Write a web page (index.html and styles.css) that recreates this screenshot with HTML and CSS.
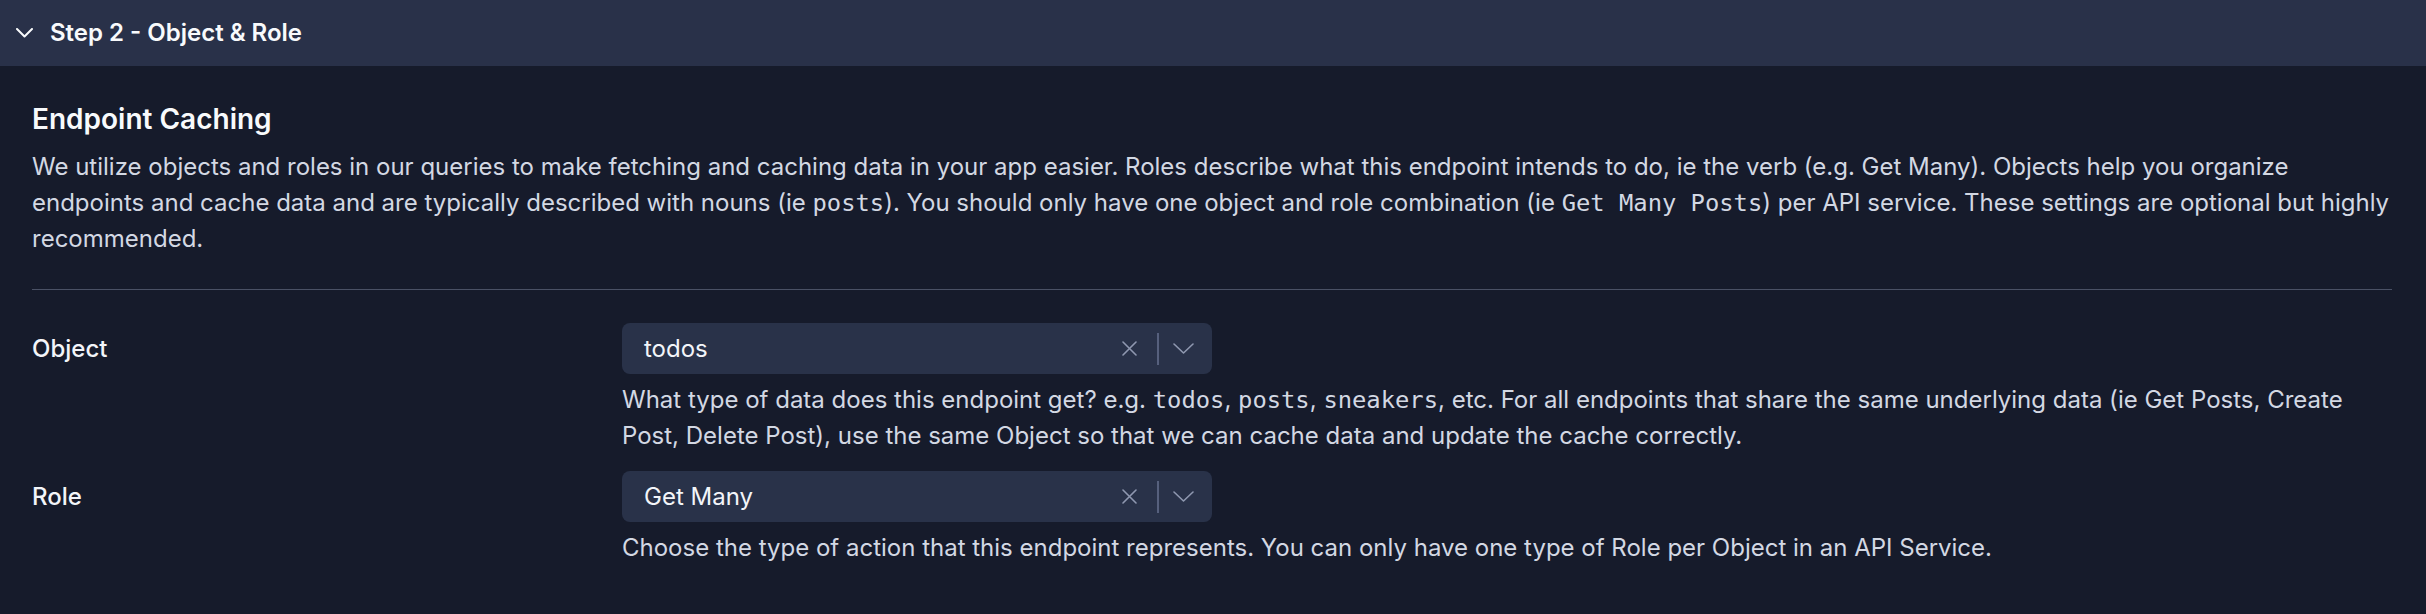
FILE: index.html
```html
<!DOCTYPE html>
<html lang="en">
<head>
<meta charset="utf-8">
<title>Step 2 - Object &amp; Role</title>
<link rel="stylesheet" href="styles.css">
</head>
<body>
<section class="panel">
  <div class="panel-header">
    <svg class="chev" width="17" height="10" viewBox="0 0 17 10" aria-hidden="true"><path d="M1 1 L8.5 8.5 L16 1" fill="none" stroke="currentColor" stroke-width="2" stroke-linecap="round" stroke-linejoin="round"/></svg>
    <span class="panel-title">Step 2 - Object &amp; Role</span>
  </div>
  <div class="panel-body">
    <h2 class="section-title">Endpoint Caching</h2>
    <p class="intro">We utilize objects and roles in our queries to make fetching and caching data in your app easier. Roles describe what this endpoint intends to do, ie the verb (e.g. Get Many). Objects help you organize endpoints and cache data and are typically described with nouns (ie <code>posts</code>). You should only have one object and role combination (ie <code>Get Many Posts</code>) per API service. These settings are optional but highly recommended.</p>
    <hr class="divider">
    <div class="field">
      <label class="field-label">Object</label>
      <div class="select">
        <span class="select-value">todos</span>
        <svg class="clear" width="15" height="15" viewBox="0 0 15 15" aria-hidden="true"><path d="M1 1 L14 14 M14 1 L1 14" stroke="currentColor" stroke-width="1.6" stroke-linecap="round"/></svg>
        <span class="sep"></span>
        <svg class="caret" width="21" height="11" viewBox="0 0 21 11" aria-hidden="true"><path d="M1 1 L10.5 10 L20 1" fill="none" stroke="currentColor" stroke-width="1.6" stroke-linecap="round" stroke-linejoin="round"/></svg>
      </div>
      <p class="help">What type of data does this endpoint get? e.g. <code>todos</code>, <code>posts</code>, <code>sneakers</code>, etc. For all endpoints that share the same underlying data (ie Get Posts, Create Post, Delete Post), use the same Object so that we can cache data and update the cache correctly.</p>
    </div>
    <div class="field">
      <label class="field-label">Role</label>
      <div class="select">
        <span class="select-value">Get Many</span>
        <svg class="clear" width="15" height="15" viewBox="0 0 15 15" aria-hidden="true"><path d="M1 1 L14 14 M14 1 L1 14" stroke="currentColor" stroke-width="1.6" stroke-linecap="round"/></svg>
        <span class="sep"></span>
        <svg class="caret" width="21" height="11" viewBox="0 0 21 11" aria-hidden="true"><path d="M1 1 L10.5 10 L20 1" fill="none" stroke="currentColor" stroke-width="1.6" stroke-linecap="round" stroke-linejoin="round"/></svg>
      </div>
      <p class="help">Choose the type of action that this endpoint represents. You can only have one type of Role per Object in an API Service.</p>
    </div>
  </div>
</section>
</body>
</html>
```
FILE: styles.css
```css
* { box-sizing: border-box; }
html, body {
  margin: 0;
  padding: 0;
  background: #161b2b;
  font-family: Inter, "Noto Sans", sans-serif;
  color: #d3d8e3;
}
.panel { width: 100%; }
.panel-header {
  height: 66px;
  background: #293149;
  display: flex;
  align-items: center;
  padding-left: 16px;
  gap: 17px;
  color: #f8fafc;
}
.chev { display: block; }
.panel-title {
  font-size: 24px;
  font-weight: 600;
  line-height: 1;
}
.panel-body {
  padding: 34px 34px 0 32px;
}
.section-title {
  margin: 0;
  font-size: 28px;
  line-height: 39.2px;
  font-weight: 600;
  color: #f8fafc;
}
.intro {
  margin: 10px 0 0;
  font-size: 24px;
  line-height: 36px;
  color: #d3d8e3;
}
code {
  font-family: "DejaVu Sans Mono", "Liberation Mono", monospace;
  font-size: 23.8px;
  line-height: 1;
}
.divider {
  margin: 32px 0 33px;
  border: 0;
  border-top: 1px solid #4a5165;
  height: 0;
}
.field {
  display: grid;
  grid-template-columns: repeat(4, 1fr);
  row-gap: 8px;
  margin-bottom: 17px;
}
.field-label {
  grid-column: 1;
  grid-row: 1;
  align-self: center;
  font-size: 24px;
  font-weight: 500;
  color: #f3f5f9;
}
.select {
  grid-column: 2;
  grid-row: 1;
  height: 51px;
  background: #293249;
  border-radius: 8px;
  display: flex;
  align-items: center;
  padding: 0 18px 0 22px;
}
.select-value {
  flex: 1;
  font-size: 24px;
  color: #f3f5f9;
}
.clear { color: #8f98b0; display: block; }
.sep {
  width: 2px;
  height: 32px;
  background: #56607d;
  margin: 0 14px 0 20px;
}
.caret { color: #8f98b0; display: block; }
.help {
  grid-column: 2 / span 3;
  grid-row: 2;
  margin: 0;
  font-size: 24px;
  line-height: 36px;
  color: #d3d8e3;
}
```
